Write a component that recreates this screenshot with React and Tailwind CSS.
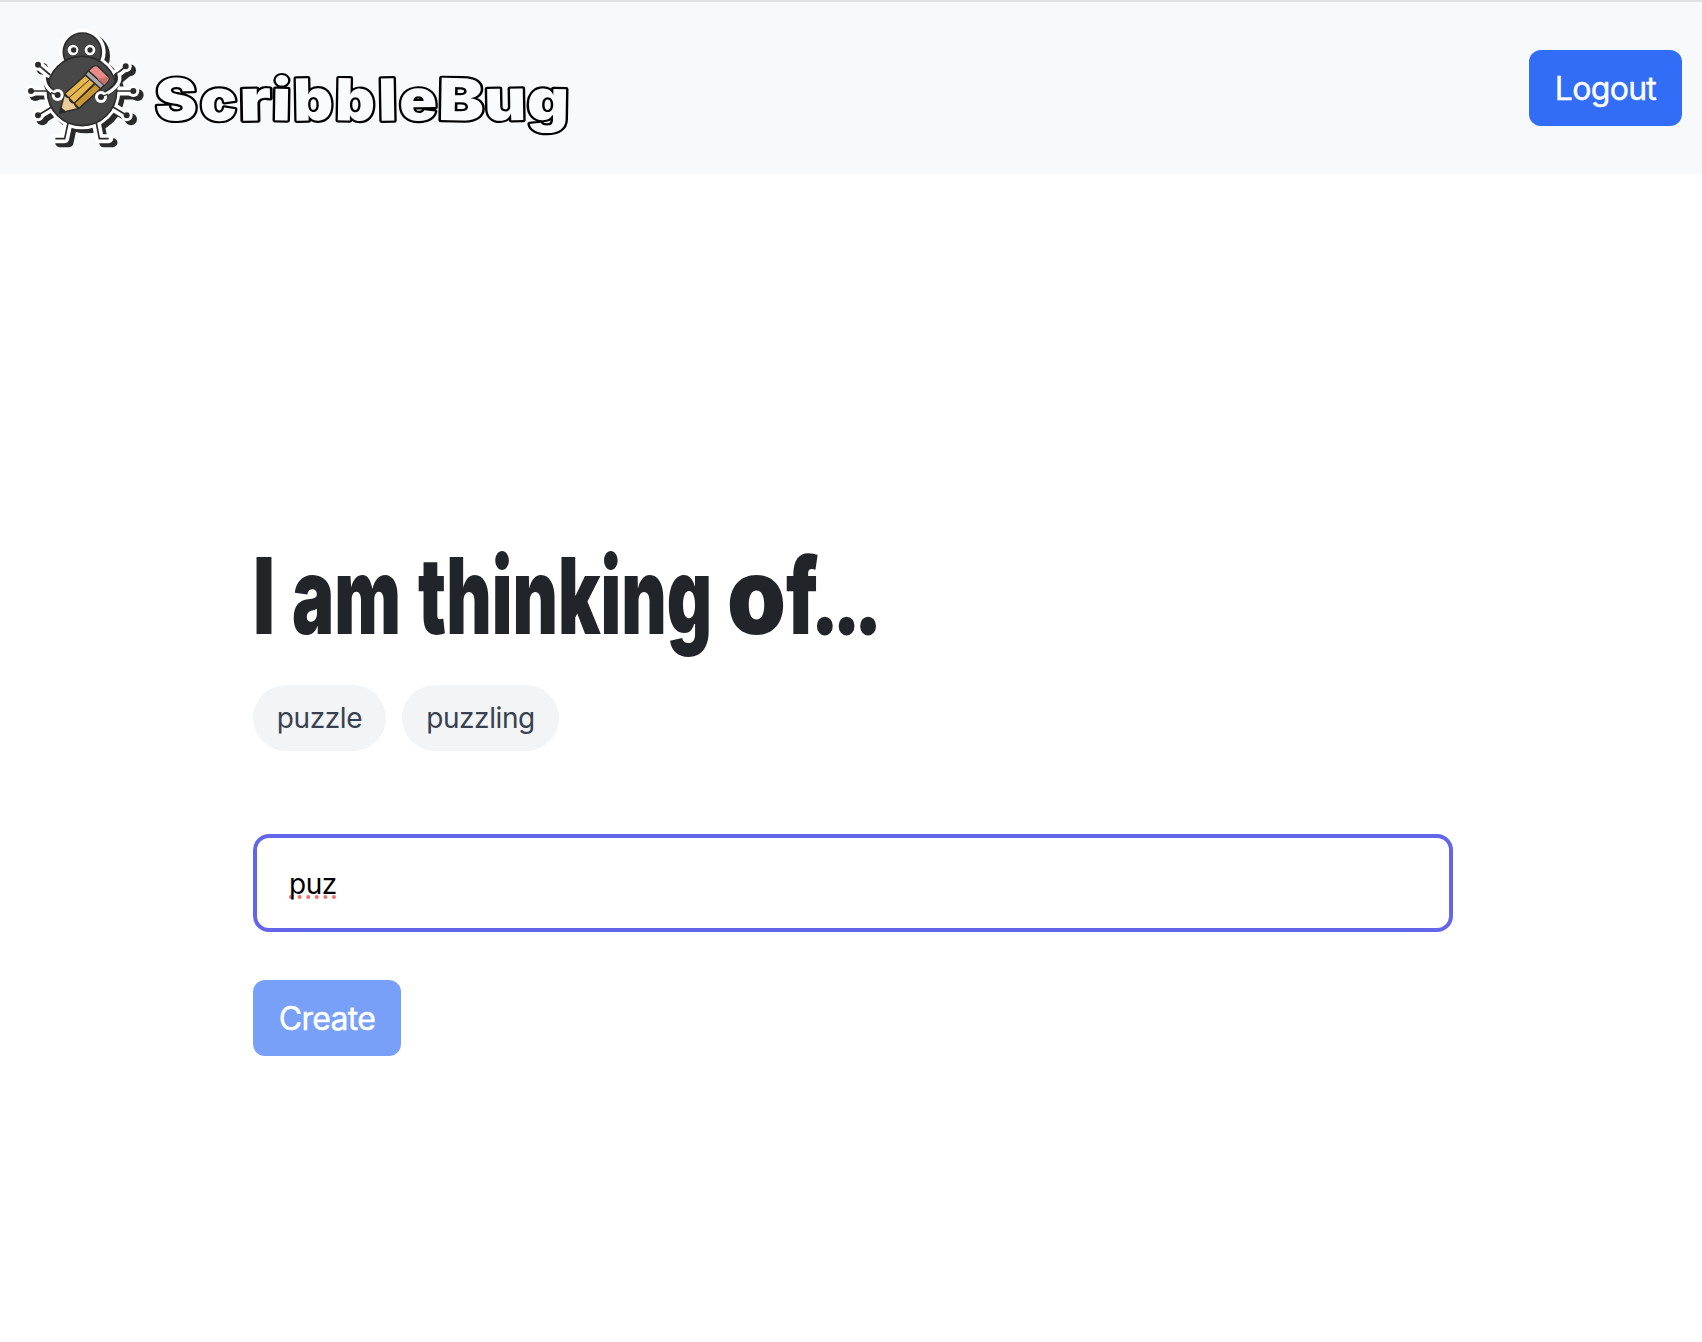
import { useState } from 'react';

// ── Constants ────────────────────────────────────────────────────────────────

const SUGGESTIONS = [
  { word: 'puzzle', size: 'w-[133px]' },
  { word: 'puzzling', size: 'w-[157px]' },
];

const HEADLINE = [
  { text: 'I', x: 0, w: 22 },
  { text: 'am', x: 39, w: 109 },
  { text: 'thinking', x: 165, w: 294 },
  { text: 'o', x: 474, w: 59 },
  { text: 'f', x: 533, w: 32 },
];

// One entry per letter of the wordmark: left edge, width and tilt
const WORDMARK = [
  ['S', 155, 42, -1],
  ['c', 200, 37, 1],
  ['r', 239, 32, -1],
  ['i', 272, 19, 1],
  ['b', 293, 40, -1],
  ['b', 335, 40, 1],
  ['l', 378, 19, -1],
  ['e', 399, 38, -1],
  ['B', 438, 46, 1],
  ['u', 484, 42, -1],
  ['g', 527, 42, 1],
];

// ── Logo ─────────────────────────────────────────────────────────────────────

const LIMBS =
  'M113 193L150 224M92 272H145M113 345L154 320M376 198L341 227M399 272H345M379 345L338 320M203 368L193 415H165M288 368L297 415H325';

const NODES = [
  [113, 193],
  [92, 272],
  [113, 345],
  [376, 198],
  [399, 272],
  [379, 345],
];

function BugSilhouette({ color, transform }) {
  return (
    <g transform={transform} fill={color} stroke={color} strokeLinecap="round" strokeLinejoin="round">
      <circle cx="246" cy="155" r="70" stroke="none" />
      <circle cx="245" cy="272" r="115" stroke="none" />
      <path d={LIMBS} fill="none" strokeWidth="27" />
      {NODES.map(([cx, cy]) => (
        <circle key={`${cx}-${cy}`} cx={cx} cy={cy} r="18" stroke="none" />
      ))}
    </g>
  );
}

function BugLogo() {
  return (
    <svg className="w-32 h-32 shrink-0" viewBox="59 71 384 384">
      <BugSilhouette color="#2a2a2a" transform="translate(13 12)" />
      <BugSilhouette color="#fff" />
      <g stroke="#2b2b2b" strokeWidth="5">
        <path d={LIMBS} fill="none" />
        <circle cx="246" cy="155" r="57" fill="#454545" />
        <circle cx="245" cy="272" r="104" fill="#484848" />
      </g>
      {NODES.map(([cx, cy]) => (
        <circle key={`${cx}-${cy}`} cx={cx} cy={cy} r="9" fill="#2b2b2b" />
      ))}
      {/* Eyes */}
      <circle cx="218" cy="149" r="16" fill="#fff" />
      <circle cx="269" cy="149" r="16" fill="#fff" />
      <circle cx="220" cy="149" r="8" fill="#2b2b2b" />
      <circle cx="269" cy="149" r="8" fill="#2b2b2b" />
      {/* Pencil */}
      <g stroke="#2b2b2b" strokeWidth="4" strokeLinejoin="round">
        <path d="M255 225L193 280L236 324L302 264Z" fill="#e8b64a" />
        <path d="M283 249L302 264L236 324L222 309Z" fill="#c99432" />
        <path d="M268 238L206 292M286 251L222 309" fill="none" strokeWidth="3" />
        <path d="M193 280L178 338L236 324Q226 322 222 309Q208 307 206 292Q196 292 193 280Z" fill="#ecca98" />
        <path d="M181 322L178 338L195 334Z" fill="#2b2b2b" />
        <path d="M264 211L255 223L301 265L312 254Z" fill="#aaa" />
        <path d="M264 211L279 198Q287 193 294 199L323 228Q329 235 322 243L312 254Z" fill="#e98b88" />
        <path d="M290 235L323 230Q328 236 322 243L312 254Z" fill="#c97270" stroke="none" />
      </g>
      {/* Arms */}
      <g fill="none" strokeLinecap="round">
        <path d="M139 240Q137 272 173 284" stroke="#2b2b2b" strokeWidth="18" />
        <path d="M351 225Q364 256 302 289" stroke="#2b2b2b" strokeWidth="18" />
        <path d="M131 228Q132 269 173 284" stroke="#fff" strokeWidth="10" />
        <path d="M356 222Q370 256 302 289" stroke="#fff" strokeWidth="10" />
      </g>
      <circle cx="172" cy="284" r="18" fill="#fff" />
      <circle cx="302" cy="290" r="18" fill="#fff" />
      <path d="M172 284L152 277M302 290L323 281" stroke="#2b2b2b" strokeWidth="4" />
      <circle cx="172" cy="284" r="9" fill="#2b2b2b" />
      <circle cx="302" cy="290" r="9" fill="#2b2b2b" />
    </svg>
  );
}

function Wordmark() {
  return (
    <svg
      className="w-[432px] h-[100px] font-['Inter',sans-serif] font-black text-[58px]"
      viewBox="148 56 432 100"
      fill="#fafbfd"
      stroke="#000"
      strokeWidth="4.4"
      strokeLinejoin="round"
      paintOrder="stroke"
    >
      {WORDMARK.map(([ch, x, w, tilt], i) => (
        <text
          key={i}
          x={x}
          y="121.5"
          textLength={w}
          lengthAdjust="spacingAndGlyphs"
          transform={`rotate(${tilt} ${x + w / 2} 100)`}
        >
          {ch}
        </text>
      ))}
    </svg>
  );
}

// ── Page parts ───────────────────────────────────────────────────────────────

function Navbar() {
  return (
    <header className="h-[174px] flex items-center justify-between bg-[#f8f9fb] border-t-2 border-[#dfe1e2] pl-5 pr-5">
      <div className="flex items-center">
        <BugLogo />
        <div className="pt-[34px]">
          <Wordmark />
        </div>
      </div>
      <button className="w-[153px] h-[76px] pt-0.5 rounded-xl bg-[#316df6] text-white text-[32px] tracking-[-0.7px] [-webkit-text-stroke:0.4px_white]">
        Logout
      </button>
    </header>
  );
}

function Headline() {
  return (
    <h1 aria-label="I am thinking of...">
      <svg
        className="w-[660px] h-[150px] font-['Inter',sans-serif] font-black fill-[#212529]"
        viewBox="0 0 660 150"
      >
        <text y="104" fontSize="106">
          {HEADLINE.map((part) => (
            <tspan key={part.text} x={part.x} textLength={part.w} lengthAdjust="spacingAndGlyphs">
              {part.text}
            </tspan>
          ))}
        </text>
        {/* The dots are rounder and heavier than the letters */}
        <text
          x="561"
          y="102"
          fontSize="70"
          textLength="65"
          lengthAdjust="spacingAndGlyphs"
          stroke="#212529"
          strokeWidth="5"
        >
          ...
        </text>
      </svg>
    </h1>
  );
}

// ── App ──────────────────────────────────────────────────────────────────────

export default function App() {
  const [value, setValue] = useState('puz');

  return (
    <div className="min-h-screen bg-white font-['Inter',sans-serif]">
      <Navbar />
      <main className="w-[1200px] ml-[253px] pt-[356px]">
        <Headline />
        <div className="mt-[5px] flex gap-4">
          {SUGGESTIONS.map(({ word, size }) => (
            <button
              key={word}
              onClick={() => setValue(word)}
              className={`${size} h-[66px] rounded-full bg-[#f3f4f6] text-[#374151] text-[28px] tracking-[-0.4px]`}
            >
              {word}
            </button>
          ))}
        </div>
        <div className="mt-[83px] h-[98px] flex items-center rounded-2xl border-4 border-[#6366e8] px-8 pt-0.5 text-[28px] tracking-[-0.5px] text-black">
          <span className="underline decoration-dotted decoration-[#f0716b] decoration-4 underline-offset-[1px] [text-decoration-skip-ink:none]">
            {value}
          </span>
        </div>
        <button className="mt-12 w-[148px] h-[76px] pt-0.5 rounded-xl bg-[#79a0f9] text-white text-[32px] tracking-[-0.7px] [-webkit-text-stroke:0.4px_white]">
          Create
        </button>
      </main>
    </div>
  );
}
